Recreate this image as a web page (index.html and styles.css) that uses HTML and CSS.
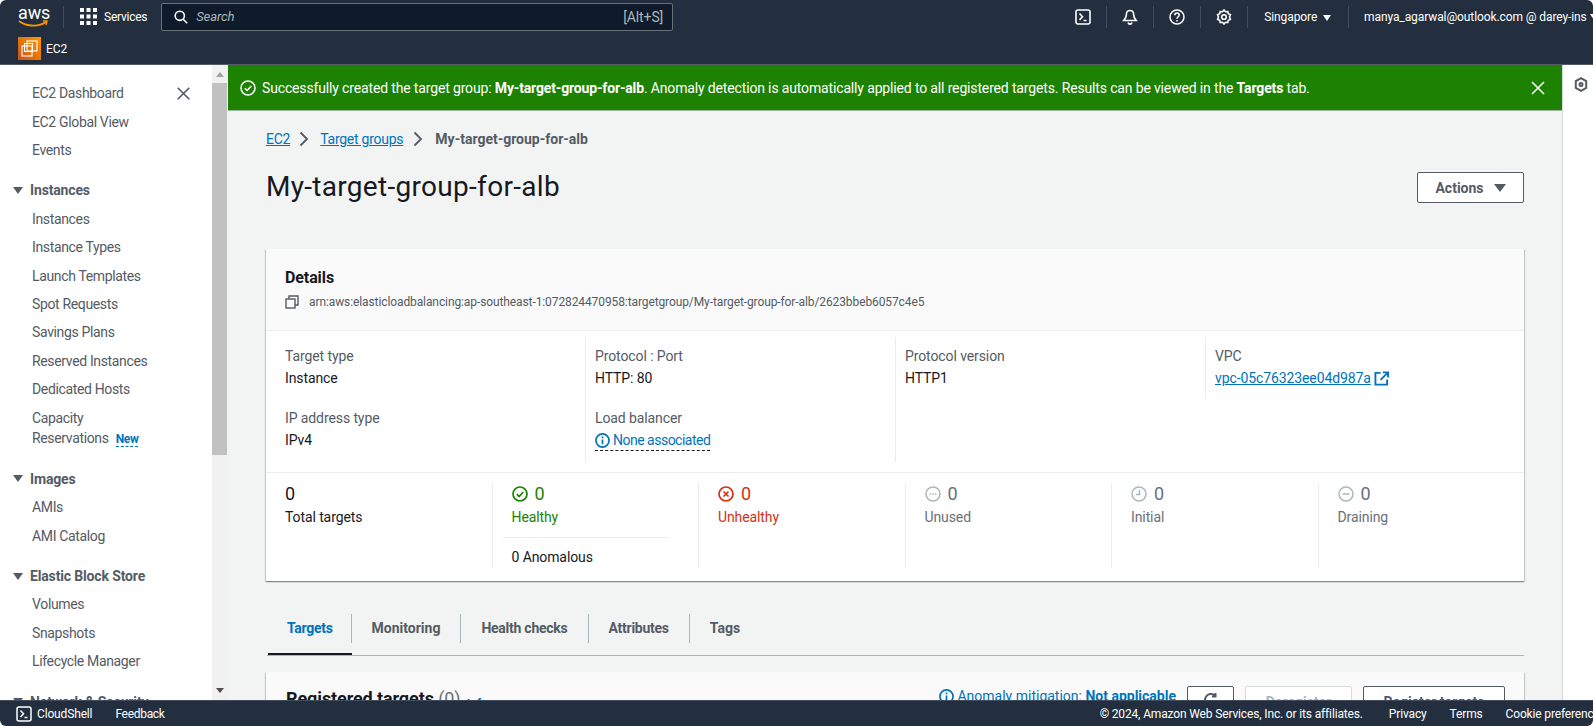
FILE: index.html
```html
<!DOCTYPE html>
<html lang="en">

<head>
  <meta charset="UTF-8"/>
  <title>My-target-group-for-alb | EC2</title>

  <link rel="stylesheet" href="styles.css">
</head>

<body>
<div class="page">
  <header class="topnav">
    <div class="toprow">
      <div class="logo">
        <span class="logo-text">aws</span>
        <svg class="logo-smile" width="30" height="8" viewBox="0 0 30 8"><path d="M1 1c8 6 20 6 27 1" fill="none" stroke="#f90" stroke-width="1.6"/><path d="M25 1l4 0-1 4" fill="none" stroke="#f90" stroke-width="1.3"/></svg>
      </div>
      <span class="topdiv logo-div"></span>
      <svg class="grid-ic" width="17" height="17" viewBox="0 0 17 17" fill="#fff"><rect width="4" height="4"/><rect x="6.5" width="4" height="4"/><rect x="13" width="4" height="4"/><rect y="6.5" width="4" height="4"/><rect x="6.5" y="6.5" width="4" height="4"/><rect x="13" y="6.5" width="4" height="4"/><rect y="13" width="4" height="4"/><rect x="6.5" y="13" width="4" height="4"/><rect x="13" y="13" width="4" height="4"/></svg>
      <span class="services">Services</span>
      <div class="search">
        <svg width="14" height="14" viewBox="0 0 14 14" fill="none" stroke="#fff" stroke-width="1.6"><circle cx="5.8" cy="5.8" r="4.6"/><path d="M9.2 9.2l4 4"/></svg>
        <span class="search-text">Search</span>
        <span class="search-key">[Alt+S]</span>
      </div>
      <div class="topright">
        <svg class="top-ic" width="16" height="16" viewBox="0 0 16 16" fill="none" stroke="#fff" stroke-width="1.6"><rect x="1" y="1" width="14" height="14" rx="2"/><path d="M4.5 4.5l3 3.2-3 3.2M8.5 11.5h3"/></svg>
        <span class="topdiv"></span>
        <svg class="top-ic" width="16" height="16" viewBox="0 0 16 16" fill="none" stroke="#fff" stroke-width="1.6"><path d="M8 1.5c-2.4 0-3.6 1.8-3.6 4 0 2.6-.8 4-2.7 6h12.6c-1.9-2-2.7-3.4-2.7-6 0-2.2-1.2-4-3.6-4z"/><path d="M6 13.5c.3 1 1 1.6 2 1.6s1.7-.6 2-1.6"/></svg>
        <span class="topdiv"></span>
        <svg class="top-ic" width="16" height="16" viewBox="0 0 16 16" fill="none" stroke="#fff" stroke-width="1.5"><circle cx="8" cy="8" r="7"/><path d="M5.8 6.2c0-1.3 1-2.1 2.2-2.1s2.2.8 2.2 2c0 1.700-2.200 1.700-2.200 3.600"/><path d="M8 11v1.500"/></svg>
        <span class="topdiv"></span>
        <svg class="top-ic" width="16" height="16" viewBox="0 0 16 16" fill="none" stroke="#fff" stroke-width="1.6"><path d="M8 1l1.500 1.700 2.300-.2.500 2.200 2.100 1-.9 2.300.9 2.300-2.100 1-.5 2.200-2.300-.2L8 15l-1.500-1.700-2.300.2-.5-2.200-2.100-1 .9-2.300-.9-2.300 2.100-1 .5-2.200 2.300.2z"/><circle cx="8" cy="8" r="2.300"/></svg>
        <span class="topdiv"></span>
        <span class="region">Singapore <i class="caret-white"></i></span>
        <span class="topdiv"></span>
        <span class="account">manya_agarwal@outlook.com @ darey-ins</span>
        <i class="caret-white"></i>
      </div>
    </div>
    <div class="subrow">
      <span class="ec2-icon">
        <svg width="17" height="17" viewBox="0 0 17 17" fill="none" stroke="#fff" stroke-width="1.100"><rect x="6" y="1" width="10" height="10"/><rect x="3.500" y="3.500" width="8" height="8"/><rect x="1" y="6" width="10" height="10"/></svg>
      </span>
      <span class="ec2-name">EC2</span>
    </div>
  </header>

  <div class="main">
    <aside class="sidebar">
      <nav class="sidenav">
        <ul class="navlist">
          <li class="nav-first">EC2 Dashboard
            <svg width="13" height="13" viewBox="0 0 13 13" fill="none" stroke="#545b64" stroke-width="1.600"><path d="M.7.7l11.600 11.600M12.300.7L.7 12.300"/></svg>
          </li>
          <li>EC2 Global View</li>
          <li>Events</li>
        </ul>
        <h4 class="navhead"><i class="caret-grey"></i>Instances</h4>
        <ul class="navlist">
          <li>Instances</li>
          <li>Instance Types</li>
          <li>Launch Templates</li>
          <li>Spot Requests</li>
          <li>Savings Plans</li>
          <li>Reserved Instances</li>
          <li>Dedicated Hosts</li>
          <li class="nav-multi">Capacity<br>Reservations <span class="newtag">New</span></li>
        </ul>
        <h4 class="navhead"><i class="caret-grey"></i>Images</h4>
        <ul class="navlist">
          <li>AMIs</li>
          <li>AMI Catalog</li>
        </ul>
        <h4 class="navhead"><i class="caret-grey"></i>Elastic Block Store</h4>
        <ul class="navlist">
          <li>Volumes</li>
          <li>Snapshots</li>
          <li>Lifecycle Manager</li>
        </ul>
        <h4 class="navhead"><i class="caret-grey"></i>Network &amp; Security</h4>
      </nav>
      <div class="scrollbar">
        <i class="arrow-up"></i>
        <div class="thumb"></div>
        <i class="arrow-down"></i>
      </div>
    </aside>

    <main class="content">
      <div class="banner">
        <svg width="16" height="16" viewBox="0 0 16 16" fill="none" stroke="#fff" stroke-width="1.500"><circle cx="8" cy="8" r="7"/><path d="M4.800 8.200l2.300 2.300 4.200-4.500"/></svg>
        <span class="banner-text">Successfully created the target group: <b>My-target-group-for-alb</b>. Anomaly detection is automatically applied to all registered targets. Results can be viewed in the <b>Targets</b> tab.</span>
        <svg class="banner-x" width="14" height="14" viewBox="0 0 14 14" fill="none" stroke="#fff" stroke-width="1.500"><path d="M1 1l12 12M13 1L1 13"/></svg>
      </div>

      <div class="okraj">
        <div class="crumbs">
          <a href="#">EC2</a>
          <svg width="12" height="16" viewBox="0 0 12 16" fill="none" stroke="#545b64" stroke-width="1.800"><path d="M2.500 1.500l6.500 6.500-6.500 6.500"/></svg>
          <a href="#">Target groups</a>
          <svg class="crumb-last" width="12" height="16" viewBox="0 0 12 16" fill="none" stroke="#545b64" stroke-width="1.800"><path d="M2.500 1.500l6.500 6.500-6.500 6.500"/></svg>
          <span class="crumb-now">My-target-group-for-alb</span>
        </div>

        <div class="titlebar">
          <h1>My-target-group-for-alb</h1>
          <button class="actions">Actions <i class="caret-grey caret-big"></i></button>
        </div>

        <section class="card">
          <div class="card-head">
            <h2>Details</h2>
            <div class="arn">
              <svg width="14" height="14" viewBox="0 0 14 14" fill="none" stroke="#545b64" stroke-width="1.400"><rect x="1" y="4" width="9" height="9"/><path d="M4 4V1h9v9h-3"/></svg>
              arn:aws:elasticloadbalancing:ap-southeast-1:072824470958:targetgroup/My-target-group-for-alb/2623bbeb6057c4e5
            </div>
          </div>

          <div class="props">
            <div class="prop-col">
              <div class="prop"><div class="lbl">Target type</div><div class="val">Instance</div></div>
              <div class="prop"><div class="lbl">IP address type</div><div class="val">IPv4</div></div>
            </div>
            <div class="prop-col">
              <div class="prop"><div class="lbl">Protocol : Port</div><div class="val">HTTP: 80</div></div>
              <div class="prop">
                <div class="lbl">Load balancer</div>
                <div class="val"><span class="dotted">
                  <svg width="15" height="15" viewBox="0 0 16 16" fill="none" stroke="#0073bb" stroke-width="1.800"><circle cx="8" cy="8" r="7"/><path d="M8 7v5M8 3.600v2"/></svg>
                  None associated</span></div>
              </div>
            </div>
            <div class="prop-col">
              <div class="prop"><div class="lbl">Protocol version</div><div class="val">HTTP1</div></div>
            </div>
            <div class="prop-col prop-short">
              <div class="prop">
                <div class="lbl">VPC</div>
                <div class="val vpc"><a href="#">vpc-05c76323ee04d987a</a>
                  <svg width="15" height="15" viewBox="0 0 16 16" fill="none" stroke="#0073bb" stroke-width="2"><path d="M7 2H1.500v12.500H14V9M9.500 1.500H15V7M15 1.500L7 9.500"/></svg>
                </div>
              </div>
            </div>
          </div>

          <div class="stats">
            <div class="stat">
              <div class="num">0</div>
              <div class="lbl-dark">Total targets</div>
            </div>
            <div class="stat">
              <div class="num st-green">
                <svg width="16" height="16" viewBox="0 0 16 16" fill="none" stroke="currentColor" stroke-width="1.700"><circle cx="8" cy="8" r="7"/><path d="M4.800 8.200l2.300 2.300 4.200-4.500"/></svg>
                0</div>
              <div class="st-green">Healthy</div>
              <div class="anomal">0 Anomalous</div>
            </div>
            <div class="stat">
              <div class="num st-red">
                <svg width="16" height="16" viewBox="0 0 16 16" fill="none" stroke="currentColor" stroke-width="1.700"><circle cx="8" cy="8" r="7"/><path d="M5.500 5.500l5 5M10.500 5.500l-5 5"/></svg>
                0</div>
              <div class="st-red">Unhealthy</div>
            </div>
            <div class="stat">
              <div class="num st-grey">
                <svg width="16" height="16" viewBox="0 0 16 16" fill="none" stroke="#aab7b8" stroke-width="1.500"><circle cx="8" cy="8" r="7"/><path d="M4.500 8h1.500M7.300 8h1.500M10 8h1.500"/></svg>
                0</div>
              <div class="st-grey">Unused</div>
            </div>
            <div class="stat">
              <div class="num st-grey">
                <svg width="16" height="16" viewBox="0 0 16 16" fill="none" stroke="#aab7b8" stroke-width="1.500"><circle cx="8" cy="8" r="7"/><path d="M8.500 4v4.500H5"/></svg>
                0</div>
              <div class="st-grey">Initial</div>
            </div>
            <div class="stat">
              <div class="num st-grey">
                <svg width="16" height="16" viewBox="0 0 16 16" fill="none" stroke="#aab7b8" stroke-width="1.500"><circle cx="8" cy="8" r="7"/><path d="M4.500 8h7"/></svg>
                0</div>
              <div class="st-grey">Draining</div>
            </div>
          </div>
        </section>

        <div class="tabs">
          <div class="tab tab-active"><span>Targets</span></div>
          <div class="tab"><span>Monitoring</span></div>
          <div class="tab tab-tight"><span>Health checks</span></div>
          <div class="tab tab-tight"><span>Attributes</span></div>
          <div class="tab tab-last"><span>Tags</span></div>
        </div>

        <section class="card card-reg">
          <h2 class="reg-title">Registered targets <span class="reg-count">(0)</span> <a class="reg-info" href="#">Info</a></h2>
          <div class="reg-tools">
            <span class="mitig">
              <svg width="15" height="15" viewBox="0 0 16 16" fill="none" stroke="#0073bb" stroke-width="1.800"><circle cx="8" cy="8" r="7"/><path d="M8 7v5M8 3.600v2"/></svg>
              Anomaly mitigation: <b>Not applicable</b></span>
            <button class="btn btn-icon">
              <svg width="16" height="16" viewBox="0 0 16 16" fill="none" stroke="#545b64" stroke-width="2"><path d="M14 8a6 6 0 1 1-2-4.500M12.500 1v3.500H9"/></svg>
            </button>
            <button class="btn btn-off">Deregister</button>
            <button class="btn btn-reg">Register targets</button>
          </div>
        </section>
      </div>
    </main>

    <aside class="rightbar">
      <svg width="14" height="15" viewBox="0 0 14 15" fill="none" stroke="#545b64" stroke-width="2"><path d="M7 1.200l5.200 3v6.600L7 13.800l-5.200-3V4.200z"/><circle cx="7" cy="7.500" r="1.500"/></svg>
    </aside>
  </div>

  <footer class="foot">
    <svg width="16" height="16" viewBox="0 0 16 16" fill="none" stroke="#fff" stroke-width="1.500"><rect x="1" y="1" width="14" height="14" rx="2"/><path d="M4.500 4.500l3 3.200-3 3.200M8.500 11.500h3"/></svg>
    <span class="foot-shell">CloudShell</span>
    <span class="foot-feed">Feedback</span>
    <div class="foot-right">
      <span class="foot-copy">© 2024, Amazon Web Services, Inc. or its affiliates.</span>
      <span>Privacy</span>
      <span>Terms</span>
      <span>Cookie preferences</span>
    </div>
  </footer>
</div>
</body>

</html>
```

FILE: styles.css
```css
* {
    box-sizing: border-box;
}

body {
    margin: 0;
    font-family: Roboto, "Liberation Sans", sans-serif;
    font-size: 14px;
    line-height: 20px;
    letter-spacing: -0.1px;
    color: #16191f;
    background: #fff;
}

.page {
    display: flex;
    flex-direction: column;
    height: 100vh;
    overflow: hidden;
    border-radius: 6px;
}

/* top navigation */
.topnav {
    flex: none;
    height: 65px;
    background-color: #232f3e;
    border-bottom: 1px solid #545b64;
    color: #fff;
    font-size: 12px;
}

.toprow {
    display: flex;
    align-items: center;
    height: 33px;
    padding-left: 18px;
}

.logo {
    flex: none;
    display: flex;
    flex-direction: column;
    width: 30px;
    height: 24px;
}

.logo-text {
    font-size: 18px;
    line-height: 16px;
    text-align: center;
}

.logo-smile {
    margin-top: -1px;
}

.topdiv {
    flex: none;
    width: 1px;
    height: 22px;
    background-color: #414d5c;
}

.logo-div {
    margin: 0 16px 0 15px;
}

.grid-ic {
    flex: none;
}

.services {
    flex: none;
    margin-left: 7px;
    letter-spacing: -0.25px;
    white-space: nowrap;
}

.search {
    flex: none;
    display: flex;
    align-items: center;
    width: 512px;
    height: 28px;
    margin-left: 14px;
    padding: 0 9px 0 12px;
    background-color: #0f1b2a;
    border: 1px solid #687078;
    border-radius: 2px;
}

.search-text {
    margin-left: 8px;
    font-size: 13px;
    font-style: italic;
    color: #aab7b8;
}

.search-key {
    margin-left: auto;
    font-size: 14px;
    color: #aab7b8;
}

.topright {
    flex: none;
    display: flex;
    align-items: center;
    margin-left: 402px;
    white-space: nowrap;
}

.top-ic {
    flex: none;
    margin: 0 15px;
}

.top-ic:first-child {
    margin-left: 0;
}

.region {
    margin: 0 17px 0 16px;
}

.caret-white {
    display: inline-block;
    margin-left: 3px;
    border-left: 4px solid transparent;
    border-right: 4px solid transparent;
    border-top: 6px solid #fff;
}

.account {
    margin-left: 15px;
}

.subrow {
    display: flex;
    align-items: center;
    height: 31px;
    padding-left: 18px;
}

.ec2-icon {
    display: flex;
    align-items: center;
    justify-content: center;
    width: 23px;
    height: 23px;
    background: linear-gradient(45deg, #c8511b, #f90);
}

.ec2-name {
    margin-left: 5px;
    font-size: 12px;
}

/* sidebar */
.main {
    display: flex;
    flex: 1;
    min-height: 0;
}

.sidebar {
    flex: none;
    display: flex;
    width: 228px;
    background: #fff;
}

.sidenav {
    flex: 1;
    padding-top: 14px;
    overflow: hidden;
    color: #545b64;
}

.navlist {
    margin: 0;
    padding: 0 0 0 32px;
    list-style: none;
    letter-spacing: -0.35px;
}

.navlist li {
    padding: 4.22px 0;
    white-space: nowrap;
}

.navlist li.nav-first {
    display: flex;
    align-items: center;
    justify-content: space-between;
    padding-right: 22px;
}

.navlist li.nav-multi {
    padding: 4.2px 0;
}

.navhead {
    display: flex;
    align-items: center;
    margin: 12px 0 0;
    padding: 4px 0 4.2px 13px;
    font-size: 14px;
    font-weight: 700;
    letter-spacing: -0.15px;
}

.caret-grey {
    display: inline-block;
    border-left: 5px solid transparent;
    border-right: 5px solid transparent;
    border-top: 7px solid #545b64;
}

.navhead .caret-grey {
    margin-right: 7px;
}

.newtag {
    margin-left: 4px;
    font-size: 12px;
    font-weight: 700;
    color: #0073bb;
    border-bottom: 1px dashed #0073bb;
}

.scrollbar {
    flex: none;
    display: flex;
    flex-direction: column;
    align-items: center;
    width: 16px;
    background-color: #f1f1f1;
}

.arrow-up {
    margin: 7px 0 6px;
    border-left: 4px solid transparent;
    border-right: 4px solid transparent;
    border-bottom: 5px solid #a3a3a3;
}

.thumb {
    align-self: flex-start;
    width: 15px;
    height: 372px;
    background-color: #c1c1c1;
}

.arrow-down {
    margin-top: auto;
    margin-bottom: 7px;
    border-left: 4px solid transparent;
    border-right: 4px solid transparent;
    border-top: 5px solid #505050;
}

/* main area */
.content {
    flex: 1;
    min-width: 0;
    overflow: hidden;
    background-color: #f2f3f3;
}

.banner {
    display: flex;
    align-items: center;
    height: 46px;
    padding: 0 17px 0 12px;
    background-color: #1d8102;
    border-bottom: 1px solid #9db59a;
    color: #fff;
    letter-spacing: -0.15px;
}

.banner-text {
    margin-left: 6px;
    white-space: nowrap;
}

.banner-x {
    margin-left: auto;
}

.okraj {
    padding: 18px 38px 0;
}

.crumbs {
    display: flex;
    align-items: center;
    height: 20px;
}

.crumbs a,
.vpc a {
    color: #0073bb;
    text-decoration: underline;
}

.crumbs a {
    letter-spacing: -0.25px;
}

.crumbs svg {
    margin: 0 10px 0 8px;
}

.crumbs svg.crumb-last {
    margin: 0 11px 0 9px;
}

.crumb-now {
    font-weight: 700;
    letter-spacing: 0;
    color: #545b64;
}

.titlebar {
    display: flex;
    justify-content: space-between;
    align-items: center;
    height: 36px;
    margin: 20px 0 44px;
}

h1 {
    margin: -1px 0 0;
    font-size: 28px;
    line-height: 36px;
    font-weight: 400;
    letter-spacing: 0.3px;
}

.actions {
    display: flex;
    align-items: center;
    justify-content: center;
    gap: 10px;
    width: 107px;
    height: 31px;
    margin-top: 1px;
    padding: 0;
    background: #fff;
    border: 1px solid #545b64;
    border-radius: 2px;
    font: 700 14px Roboto, sans-serif;
    color: #545b64;
}

.caret-big {
    border-left-width: 6px;
    border-right-width: 6px;
    border-top-width: 8px;
}

.card {
    background: #fff;
    box-shadow: 0 1px 1px 0 rgba(0, 28, 36, .3), 1px 1px 1px 0 rgba(0, 28, 36, .15), -1px 1px 1px 0 rgba(0, 28, 36, .15);
}

.card-head {
    height: 82px;
    padding: 17px 19px 0;
    background-color: #fafafa;
    border-bottom: 1px solid #eaeded;
}

h2 {
    margin: 0;
    font-size: 16px;
    line-height: 24px;
    font-weight: 700;
}

.arn {
    display: flex;
    align-items: center;
    gap: 10px;
    margin-top: 2px;
    font-size: 12px;
    color: #545b64;
}

.props {
    display: grid;
    grid-template-columns: repeat(4, 1fr);
    padding: 6px 9px 10px 9px;
    border-bottom: 1px solid #eaeded;
}

.prop-col {
    height: 125px;
    padding: 9px 0 0 9px;
    border-left: 1px solid #eaeded;
}

.prop-col:first-child {
    padding-left: 10px;
    border-left: none;
}

.prop-short {
    height: 62px;
}

.prop {
    margin-bottom: 20px;
}

.lbl {
    color: #545b64;
    margin-bottom: 2px;
}

.val svg {
    vertical-align: -3px;
}

.dotted {
    display: inline-block;
    line-height: 20px;
    letter-spacing: -0.5px;
    color: #0073bb;
    border-bottom: 1px dashed #16191f;
}

.stats {
    display: grid;
    grid-template-columns: repeat(6, 1fr);
    padding: 10px 0 13px 19px;
}

.stat {
    height: 85px;
    padding-left: 19px;
    border-left: 1px solid #eaeded;
}

.stat:first-child {
    padding-left: 0;
    border-left: none;
}

.num {
    display: flex;
    align-items: center;
    gap: 7px;
    height: 24px;
    margin-top: -1px;
    margin-bottom: 1px;
    font-size: 18px;
}

.lbl-dark {
    margin-top: 1px;
}

.st-green {
    color: #1d8102;
}

.st-red {
    color: #d13212;
}

.st-grey {
    color: #687078;
}

.anomal {
    margin: 10px 29px 0 -9px;
    padding: 9px 0 0 9px;
    border-top: 1px solid #eaeded;
}

/* tabs */
.tabs {
    display: flex;
    height: 51px;
    margin: 24px 0 16px 1px;
    padding-left: 1px;
    border-bottom: 1px solid #aab7b8;
    letter-spacing: 0;
}

.tab {
    height: 50px;
    padding-top: 9px;
    border-bottom: 2px solid transparent;
    font-weight: 700;
    color: #545b64;
}

.tab span {
    display: block;
    padding: 4px 20px 5px;
    border-right: 1px solid #aab7b8;
}

.tab-active {
    letter-spacing: -0.3px;
    color: #0073bb;
    border-bottom-color: #16191f;
}

.tab-active span {
    padding: 4px 18px 5px 19px;
}

.tab-tight {
    letter-spacing: -0.25px;
}

.tab-last span {
    border-right: none;
}

/* registered targets */
.card-reg {
    display: flex;
    justify-content: space-between;
    height: 60px;
    padding: 15px 19px 0 20px;
    background-color: #fafafa;
}

.reg-title {
    font-size: 18px;
}

.reg-count {
    font-weight: 400;
    color: #687078;
}

.reg-info {
    margin-left: 2px;
    font-size: 12px;
    color: #0073bb;
    text-decoration: none;
    vertical-align: -3px;
}

.reg-tools {
    display: flex;
    align-items: flex-start;
    gap: 11px;
    margin-top: -1px;
}

.mitig {
    letter-spacing: 0;
    color: #0073bb;
    white-space: nowrap;
}

.mitig svg {
    vertical-align: -3px;
}

.btn {
    height: 31px;
    padding: 0;
    background: #fff;
    border: 1px solid #545b64;
    border-radius: 2px;
    font: 700 14px Roboto, sans-serif;
    color: #545b64;
}

.btn-icon {
    width: 47px;
}

.btn-off {
    width: 107px;
    color: #aab7b8;
    border-color: #d5dbdb;
}

.btn-reg {
    width: 142px;
}

.rightbar {
    flex: none;
    width: 31px;
    padding: 12px 0 0 11px;
    background: #fff;
    border-left: 1px solid #d5dbdb;
}

/* footer */
.foot {
    flex: none;
    display: flex;
    align-items: center;
    height: 26px;
    padding-left: 16px;
    background-color: #232f3e;
    border-top: 1px solid #414d5c;
    font-size: 12px;
    color: #fff;
    white-space: nowrap;
    letter-spacing: -0.15px;
}

.foot svg {
    flex: none;
}

.foot-shell {
    margin-left: 5px;
}

.foot-feed {
    margin-left: 23px;
    letter-spacing: -0.3px;
}

.foot-right {
    flex: none;
    display: flex;
    gap: 23px;
    margin-left: 935px;
}

.foot-copy {
    margin-right: 3px;
}
```
